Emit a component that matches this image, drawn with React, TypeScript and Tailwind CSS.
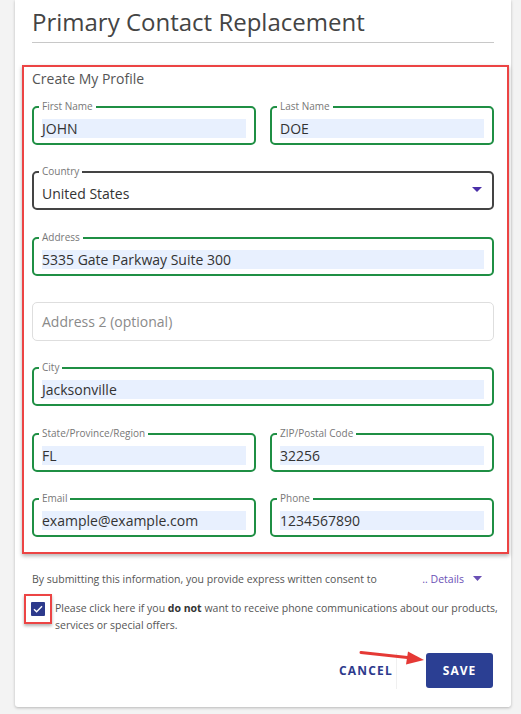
import { useState } from "react";

type FieldProps = {
  label: string;
  value: string;
};

function Field({ label, value }: FieldProps) {
  return (
    <div className="relative h-[39px] rounded-[5px] border-2 border-[#1f8f44]">
      <span className="absolute -top-[8px] left-[5px] bg-white px-[3px] text-[10px] leading-[12px] text-[#777]">
        {label}
      </span>
      <div className="mx-[8px] mt-[11px] h-[19px] bg-[#e8f0fe] text-[14px] leading-[19px] text-[#333]">
        {value}
      </div>
    </div>
  );
}

export default function App() {
  const [optOut, setOptOut] = useState(true);

  return (
    <div
      className="min-h-screen bg-[#f3f3f3]"
      style={{ fontFamily: '"Open Sans", "Noto Sans", sans-serif' }}
    >
      <div className="ml-[15px] w-[496px] rounded-b-[3px] bg-white pb-[18px] shadow-[0_1px_3px_rgba(0,0,0,0.25)]">
        <header className="px-[17px] pt-[6px]">
          <h1 className="text-[24px] leading-[32px] text-[#444]">Primary Contact Replacement</h1>
          <div className="mt-[4px] h-px bg-[#c8c8c8]" />
        </header>

        <div className="ml-[7px] mr-[2px] mt-[22px] border-2 border-[#ec4444] pb-[15px] pl-[8px] pr-[13px] pt-[2px] shadow-[0_2px_4px_rgba(0,0,0,0.3)]">
          <div className="text-[14px] leading-[20px] text-[#555]">Create My Profile</div>

          <div className="mt-[17px] flex flex-col gap-[26.33px]">
            <div className="grid grid-cols-2 gap-[14px]">
              <Field label="First Name" value="JOHN" />
              <Field label="Last Name" value="DOE" />
            </div>

            <div className="relative flex h-[39px] items-center justify-between rounded-[5px] border-2 border-[#444] pl-[8px] pr-[10px]">
              <span className="absolute -top-[8px] left-[5px] bg-white px-[3px] text-[10px] leading-[12px] text-[#777]">
                Country
              </span>
              <span className="mt-[6px] text-[14px] text-[#333]">United States</span>
              <svg width="10" height="6" viewBox="0 0 10 6" className="mt-[-2px]">
                <path d="M0 0h10L5 5z" fill="#4a2fa8" />
              </svg>
            </div>

            <Field label="Address" value="5335 Gate Parkway Suite 300" />

            <div className="flex h-[39px] items-center rounded-[5px] border border-[#dedede] pl-[9px] text-[14px] text-[#8a8a8a]">
              Address 2 (optional)
            </div>

            <Field label="City" value="Jacksonville" />

            <div className="grid grid-cols-2 gap-[14px]">
              <Field label="State/Province/Region" value="FL" />
              <Field label="ZIP/Postal Code" value="32256" />
            </div>

            <div className="grid grid-cols-2 gap-[14px]">
              <Field label="Email" value="example@example.com" />
              <Field label="Phone" value="1234567890" />
            </div>
          </div>
        </div>

        <div className="mt-[17px] flex items-center px-[17px] text-[10.5px] leading-[16px] text-[#555]">
          <span>By submitting this information, you provide express written consent to</span>
          <span className="ml-auto mr-[12px] flex items-center gap-[9px] text-[#6a50b5]">
            .. Details
            <svg width="9" height="6" viewBox="0 0 9 6">
              <path d="M0 0h9L4.5 5z" fill="#6a50b5" />
            </svg>
          </span>
        </div>

        <div className="mt-[13px] flex items-start pl-[9px] pr-[8px]">
          <div className="mt-[-6px] flex h-[30px] w-[28px] shrink-0 items-center justify-center border-[2.5px] border-[#ec4444] shadow-[0_2px_3px_rgba(0,0,0,0.3)]">
            <button
              type="button"
              onClick={() => setOptOut(!optOut)}
              className="flex h-[14px] w-[14px] items-center justify-center rounded-[1px] bg-[#2d3a8c]"
            >
              {optOut && (
                <svg width="10" height="8" viewBox="0 0 10 8">
                  <path d="M1 4.2l2.6 2.5L9 1.2" fill="none" stroke="#fff" strokeWidth="1.4" />
                </svg>
              )}
            </button>
          </div>
          <p className="ml-[3px] text-[10.5px] leading-[17px] text-[#555]">
            Please click here if you <b className="text-[#333]">do not</b> want to receive phone communications about our products, services or special offers.
          </p>
        </div>

        <div className="relative mt-[19px] flex items-center justify-end pr-[18px]">
          <button
            type="button"
            className="mr-[3px] h-[35px] text-[12px] font-bold tracking-[1.2px] text-[#2d3a8c]"
          >
            CANCEL
          </button>
          <div className="mr-[29px] h-[36px] w-px bg-[#f0f0f0]" />
          <button
            type="button"
            className="h-[35px] w-[67px] rounded-[3px] bg-[#2b3f93] text-[12px] font-bold tracking-[1px] text-white"
          >
            SAVE
          </button>
          <svg
            className="absolute left-[343px] top-[-4px]"
            width="70"
            height="20"
            viewBox="0 0 70 20"
          >
            <path d="M3 3.5 L54 9" stroke="#e53935" strokeWidth="3" strokeLinecap="round" />
            <path d="M50 2.5 L66 11 L48 15.5 Z" fill="#e53935" />
          </svg>
        </div>
      </div>
    </div>
  );
}
